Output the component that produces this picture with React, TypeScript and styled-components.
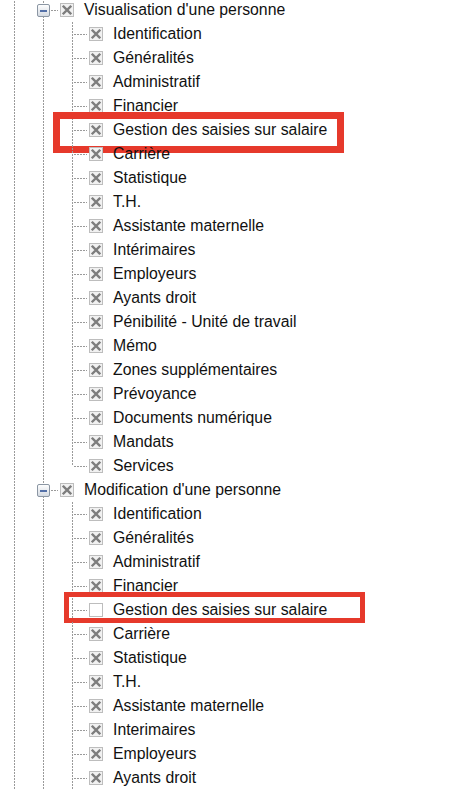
import * as React from 'react';
import styled, { createGlobalStyle } from 'styled-components';

const LINE = '#9a9a9a';

const GlobalStyle = createGlobalStyle`
  html, body {
    margin: 0;
    padding: 0;
    background: #ffffff;
    overflow: hidden;
  }
  body {
    font-family: 'Liberation Sans', Arial, sans-serif;
  }
`;

interface Mark {
  left: number;
  top: number;
  width: number;
  height: number;
  thickness: number;
}

interface TreeNode {
  label: string;
  checked: boolean;
  mark?: Mark;
}

interface Group {
  label: string;
  children: TreeNode[];
  // more children below the visible part
  continues?: boolean;
}

const leaf = (label: string, checked = true, mark?: Mark): TreeNode => ({ label, checked, mark });

const groups: Group[] = [
  {
    label: "Visualisation d'une personne",
    children: [
      leaf('Identification'),
      leaf('Généralités'),
      leaf('Administratif'),
      leaf('Financier'),
      leaf('Gestion des saisies sur salaire', true, { left: 53, top: -6, width: 291, height: 41, thickness: 7 }),
      leaf('Carrière'),
      leaf('Statistique'),
      leaf('T.H.'),
      leaf('Assistante maternelle'),
      leaf('Intérimaires'),
      leaf('Employeurs'),
      leaf('Ayants droit'),
      leaf('Pénibilité - Unité de travail'),
      leaf('Mémo'),
      leaf('Zones supplémentaires'),
      leaf('Prévoyance'),
      leaf('Documents numérique'),
      leaf('Mandats'),
      leaf('Services'),
    ],
  },
  {
    label: "Modification d'une personne",
    continues: true,
    children: [
      leaf('Identification'),
      leaf('Généralités'),
      leaf('Administratif'),
      leaf('Financier'),
      leaf('Gestion des saisies sur salaire', false, { left: 64, top: -6, width: 301, height: 31, thickness: 5 }),
      leaf('Carrière'),
      leaf('Statistique'),
      leaf('T.H.'),
      leaf('Assistante maternelle'),
      leaf('Interimaires'),
      leaf('Employeurs'),
      leaf('Ayants droit'),
    ],
  },
];

const Tree = styled.ul`
  list-style: none;
  margin: -2px 0 0 0;
  padding: 0;
`;

const Row = styled.li`
  position: relative;
  display: flex;
  align-items: center;
  height: 24px;
  white-space: nowrap;
`;

// vertical dotted guide of an ancestor level
const Guide = styled.span`
  flex: none;
  display: block;
  width: 29px;
  height: 24px;
  background-image: linear-gradient(to bottom, ${LINE} 2px, transparent 2px);
  background-size: 1px 3px;
  background-position: 14px 0;
  background-repeat: repeat-y;
`;

const Cell = styled.svg`
  flex: none;
  display: block;
  width: 29px;
  height: 24px;
`;

const Box = styled.svg`
  flex: none;
  display: block;
  width: 14px;
  height: 14px;
  margin-left: 2px;
`;

const Label = styled.span`
  margin-left: 10px;
  font-size: 15.8px;
  line-height: 24px;
  color: #111111;
`;

const Highlight = styled.div<{ $left: number; $top: number; $width: number; $height: number; $thickness: number }>`
  position: absolute;
  left: ${(p) => p.$left}px;
  top: ${(p) => p.$top}px;
  width: ${(p) => p.$width}px;
  height: ${(p) => p.$height}px;
  box-sizing: border-box;
  border: ${(p) => p.$thickness}px solid #e6392b;
  pointer-events: none;
`;

const VLine = ({ from, to }: { from: number; to: number }) => (
  <line x1={14.5} y1={from} x2={14.5} y2={to} stroke={LINE} strokeDasharray="2 1" shapeRendering="crispEdges" />
);

const Connector = ({ last, expander }: { last?: boolean; expander?: boolean }) => (
  <Cell viewBox="0 0 29 24">
    <VLine from={0} to={12} />
    {!last && <VLine from={12} to={24} />}
    <line x1={16} y1={12.5} x2={29} y2={12.5} stroke={LINE} strokeDasharray="2 1" shapeRendering="crispEdges" />
    {expander && (
      <g>
        <defs>
          <linearGradient id="exp" x1="0" y1="0" x2="0" y2="1">
            <stop offset="0" stopColor="#ffffff" />
            <stop offset="1" stopColor="#d3d9e1" />
          </linearGradient>
        </defs>
        <rect x={8.5} y={6.5} width={12} height={12} rx={1.5} fill="url(#exp)" stroke="#8b96a3" />
        <rect x={11} y={12} width={7} height={2} fill="#5470a8" />
      </g>
    )}
  </Cell>
);

const CheckBox = ({ checked }: { checked: boolean }) => (
  <Box viewBox="0 0 14 14">
    <rect x={0.5} y={0.5} width={13} height={13} fill={checked ? '#f1f1f1' : '#ffffff'} stroke="#bdbdbd" />
    {checked && (
      <path d="M3.6 3.6 L10.4 10.4 M10.4 3.6 L3.6 10.4" stroke="#7d7d7d" strokeWidth={2.4} strokeLinecap="square" />
    )}
  </Box>
);

const TreeRow = ({ depth, node, last, expander }: { depth: number; node: TreeNode; last?: boolean; expander?: boolean }) => (
  <Row>
    {Array.from({ length: depth }).map((_, i) => (
      <Guide key={i} />
    ))}
    <Connector last={last} expander={expander} />
    <CheckBox checked={node.checked} />
    <Label>{node.label}</Label>
    {node.mark && (
      <Highlight
        $left={node.mark.left}
        $top={node.mark.top}
        $width={node.mark.width}
        $height={node.mark.height}
        $thickness={node.mark.thickness}
      />
    )}
  </Row>
);

const App = () => {
  return (
    <>
      <GlobalStyle />
      <Tree>
        {groups.map((group) => (
          <React.Fragment key={group.label}>
            <TreeRow depth={1} node={{ label: group.label, checked: true }} expander />
            {group.children.map((child, i) => (
              <TreeRow
                key={group.label + i}
                depth={2}
                node={child}
                last={!group.continues && i === group.children.length - 1}
              />
            ))}
          </React.Fragment>
        ))}
      </Tree>
    </>
  );
};

export default App;
